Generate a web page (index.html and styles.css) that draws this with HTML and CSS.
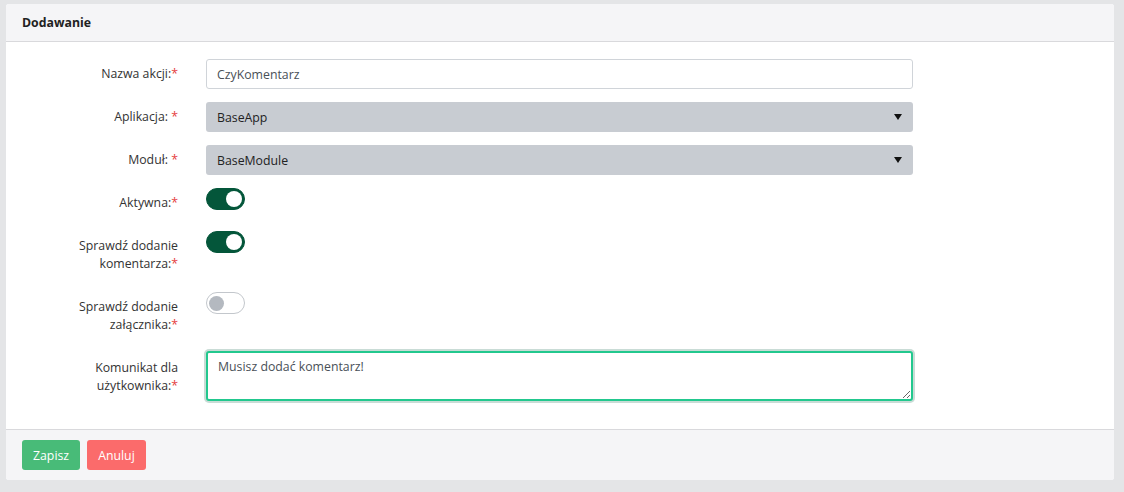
FILE: index.html
```html
<!DOCTYPE html>
<html lang="pl">
<head>
<meta charset="utf-8">
<title>Dodawanie</title>
<link rel="stylesheet" href="styles.css">
</head>
<body>
<div class="card">
  <div class="card-header">Dodawanie</div>
  <form class="card-body">
    <div class="row">
      <label class="lbl">Nazwa akcji:<span class="req">*</span></label>
      <div class="ctrl"><input class="input" type="text" value="CzyKomentarz"></div>
    </div>
    <div class="row">
      <label class="lbl">Aplikacja: <span class="req">*</span></label>
      <div class="ctrl"><div class="select"><span>BaseApp</span><span class="arrow"></span></div></div>
    </div>
    <div class="row">
      <label class="lbl">Moduł: <span class="req">*</span></label>
      <div class="ctrl"><div class="select"><span>BaseModule</span><span class="arrow"></span></div></div>
    </div>
    <div class="row">
      <label class="lbl">Aktywna:<span class="req">*</span></label>
      <div class="ctrl"><span class="toggle on"><span class="knob"></span></span></div>
    </div>
    <div class="row">
      <label class="lbl"><span class="line">Sprawdź dodanie</span><span class="line">komentarza:<span class="req">*</span></span></label>
      <div class="ctrl"><span class="toggle on"><span class="knob"></span></span></div>
    </div>
    <div class="row">
      <label class="lbl lbl-tight"><span class="line">Sprawdź dodanie</span><span class="line">załącznika:<span class="req">*</span></span></label>
      <div class="ctrl"><span class="toggle"><span class="knob"></span></span></div>
    </div>
    <div class="row">
      <label class="lbl lbl-ta"><span class="line">Komunikat dla</span><span class="line">użytkownika:<span class="req">*</span></span></label>
      <div class="ctrl"><textarea class="textarea">Musisz dodać komentarz!</textarea></div>
    </div>
  </form>
  <div class="card-footer">
    <button class="btn btn-save" type="button">Zapisz</button>
    <button class="btn btn-cancel" type="button">Anuluj</button>
  </div>
</div>
</body>
</html>
```

FILE: styles.css
```css
* { box-sizing: border-box; }
html, body { height: 100%; }
body {
  margin: 0;
  padding: 4px 10px 0 6px;
  background: #e4e5e7;
  font-family: "Open Sans", "Liberation Sans", sans-serif;
  font-size: 12.3px;
  color: #333;
}
.card {
  background: #fff;
  border-radius: 3px;
  overflow: hidden;
}
.card-header {
  background: #f5f5f7;
  border-bottom: 1px solid #d9d9dc;
  height: 38px;
  padding: 0 16px;
  display: flex;
  align-items: center;
  font-weight: 700;
  color: #222;
  font-size: 12.3px;
}
.card-body {
  margin: 0;
  padding: 17px 0 28px;
  display: flex;
  flex-direction: column;
  gap: 13px;
}
.row {
  display: grid;
  grid-template-columns: 172px 707px;
  column-gap: 28px;
  align-items: start;
}
.lbl {
  text-align: right;
  line-height: 18px;
  padding: 6px 0 6px 64px;
  color: #333;
}
.line { display: block; }
.lbl-tight { padding-bottom: 4px; }
.lbl-ta { padding-top: 8px; }
.req { color: #e53e3e; }
.ctrl { display: flex; }
.input, .textarea {
  width: 100%;
  font-family: inherit;
  font-size: 12.3px;
  color: #495057;
  border: 1px solid #d0d4d9;
  border-radius: 3px;
  padding: 0 10px;
  background: #fff;
}
.input { height: 30px; }
.select {
  width: 100%;
  height: 30px;
  background: #c8ccd2;
  border-radius: 3px;
  display: flex;
  align-items: center;
  justify-content: space-between;
  padding: 0 11px;
  color: #222;
}
.arrow {
  width: 0;
  height: 0;
  border-left: 4px solid transparent;
  border-right: 4px solid transparent;
  border-top: 6px solid #111;
}
.toggle {
  width: 39px;
  height: 22px;
  border-radius: 11px;
  border: 1px solid #c3c7cc;
  background: #fff;
  display: flex;
  align-items: center;
  padding: 0 2px;
}
.toggle .knob {
  width: 15px;
  height: 15px;
  border-radius: 50%;
  background: #b4b9c0;
}
.toggle.on {
  background: #04563a;
  border-color: #04563a;
  justify-content: flex-end;
}
.toggle.on .knob {
  width: 16px;
  height: 16px;
  background: #fff;
}
.textarea {
  height: 50px;
  padding: 5px 10px;
  line-height: 18px;
  resize: vertical;
  border: 2px solid #22c88e;
  box-shadow: 0 0 0 2px #c9dcd6;
  outline: none;
}
.card-footer {
  background: #f5f5f7;
  border-top: 1px solid #d9d9dc;
  height: 51px;
  padding: 0 16px;
  display: flex;
  align-items: center;
  gap: 7px;
}
.btn {
  height: 30px;
  border: 0;
  border-radius: 3px;
  padding: 0 11px;
  color: #fff;
  font-family: inherit;
  font-size: 12.3px;
}
.btn-save { background: #48bb78; }
.btn-cancel { background: #fb6b6b; }
```
